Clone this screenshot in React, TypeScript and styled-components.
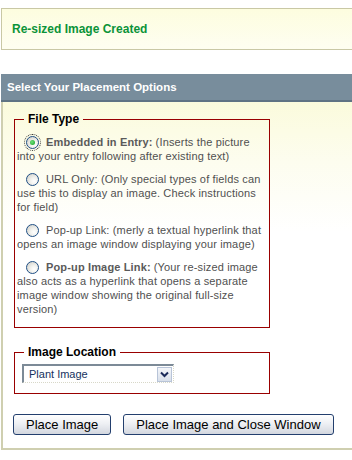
import React from 'react';
import styled, {createGlobalStyle, css} from 'styled-components';

const GlobalStyle = createGlobalStyle`
  html, body {
    margin: 0;
    padding: 0;
    background: #fff;
  }
  body {
    font-family: "Liberation Sans", Arial, sans-serif;
  }
`

const Page = styled.div`
  width: 352px;
  height: 460px;
  overflow: hidden;
  box-sizing: border-box;
  padding: 8px 0 0 1px;
`

const Notice = styled.div`
  height: 40px;
  display: flex;
  align-items: center;
  padding-left: 10px;
  border: 1px solid #c9c8a5;
  border-right: none;
  background: linear-gradient(to bottom, #fdfddf, #fefef1);
  font-weight: bold;
  font-size: 12px;
  color: #0b9339;
`

const Header = styled.div`
  margin-top: 24px;
  height: 26px;
  display: flex;
  align-items: center;
  padding-left: 6px;
  background: #788d9c;
  border-bottom: 2px solid #5f7383;
  font-weight: bold;
  font-size: 11.5px;
  color: #fff;
`

const Panel = styled.div`
  height: 348px;
  box-sizing: border-box;
  padding: 10px 0 0 10px;
  border-left: 2px solid #cfcfb0;
  border-bottom: 2px solid #cfcfb0;
  background: linear-gradient(to bottom, #fbfbdc 0px, #fdfdef 60px, #fff 130px);
`

const Fieldset = styled.fieldset<{ top?: number, compact?: boolean }>`
  width: 256px;
  box-sizing: border-box;
  margin: ${({top}) => top || 0}px 0 0 1px;
  padding: ${({compact}) => compact ? '5px 2px 10px' : '9px 2px 11px'};
  border: 1px solid #990000;
`

const Legend = styled.legend`
  margin-left: 7px;
  padding: 0 4px;
  font-weight: bold;
  font-size: 12px;
  line-height: 14px;
  color: #000;
`

const Option = styled.p`
  margin: 0 0 9px;
  font-size: 11px;
  line-height: 14px;
  letter-spacing: 0.15px;
  color: #505050;

  &:last-child {
    margin-bottom: 0;
  }
`

const Label = styled.b`
  margin-right: 3px;
  color: #5a5a5a;
`

const Radio = styled.span<{ checked?: boolean }>`
  position: relative;
  display: inline-block;
  width: 13px;
  height: 13px;
  margin: 0 7px 0 9px;
  vertical-align: -3px;
  box-sizing: border-box;
  border-radius: 50%;
  border: 1px solid #1f4f85;
  background: radial-gradient(circle at 65% 65%, #fff 0%, #f2f2ee 35%, #c9c9c2 100%);

  ${({checked}) => checked && css`
    outline: 1px dotted #333;
    outline-offset: 1px;

    &::after {
      content: '';
      position: absolute;
      left: 3px;
      top: 3px;
      width: 5px;
      height: 5px;
      border-radius: 50%;
      background: radial-gradient(circle at 40% 40%, #6ee07a, #12a024);
    }
  `}
`

const Select = styled.div`
  display: flex;
  align-items: center;
  width: 152px;
  height: 19px;
  margin-left: 5px;
  box-sizing: border-box;
  border-top: 2px solid #7c8a97;
  border-left: 2px solid #7c8a97;
  border-right: 1px dotted #d8d8c8;
  border-bottom: 1px dotted #d8d8c8;
  background: #fff;
`

const SelectText = styled.span`
  flex: 1;
  padding-left: 5px;
  font-size: 11px;
  color: #15325e;
`

const Arrow = styled.span`
  display: flex;
  align-items: center;
  justify-content: center;
  width: 15px;
  height: 15px;
  margin-right: 1px;
  box-sizing: border-box;
  border: 1px solid #b8c4d8;
  background: linear-gradient(to bottom, #f4f6fa, #d8dfea);
`

const Buttons = styled.div`
  display: flex;
  gap: 12px;
  margin-top: 20px;
`

const Button = styled.button`
  height: 21px;
  padding: 0 12px;
  border: 1px solid #233f6e;
  border-radius: 3px;
  background: linear-gradient(to bottom, #ffffff 0%, #eef0f4 45%, #d3d7df 100%);
  font-family: "Liberation Sans", Arial, sans-serif;
  font-size: 13px;
  color: #000;
  cursor: pointer;
`

const App = () => {
	return (
		<Page>
			<GlobalStyle/>
			<Notice>Re-sized Image Created</Notice>
			<Header>Select Your Placement Options</Header>
			<Panel>
				<Fieldset>
					<Legend>File Type</Legend>
					<Option>
						<Radio checked/><Label>Embedded in Entry:</Label>(Inserts the picture into your entry following after existing text)
					</Option>
					<Option>
						<Radio/>URL Only: (Only special types of fields can use this to display an image. Check instructions for field)
					</Option>
					<Option>
						<Radio/>Pop-up Link: (merly a textual hyperlink that opens an image window displaying your image)
					</Option>
					<Option>
						<Radio/><Label>Pop-up Image Link:</Label>(Your re-sized image also acts as a hyperlink that opens a separate image window showing the original full-size version)
					</Option>
				</Fieldset>
				<Fieldset top={17} compact>
					<Legend>Image Location</Legend>
					<Select>
						<SelectText>Plant Image</SelectText>
						<Arrow>
							<svg width="9" height="7" viewBox="0 0 9 7">
								<path d="M1 1.5 L4.5 5 L8 1.5" fill="none" stroke="#1a2a5a" strokeWidth="2"/>
							</svg>
						</Arrow>
					</Select>
				</Fieldset>
				<Buttons>
					<Button>Place Image</Button>
					<Button>Place Image and Close Window</Button>
				</Buttons>
			</Panel>
		</Page>
	);
};

export default App;
